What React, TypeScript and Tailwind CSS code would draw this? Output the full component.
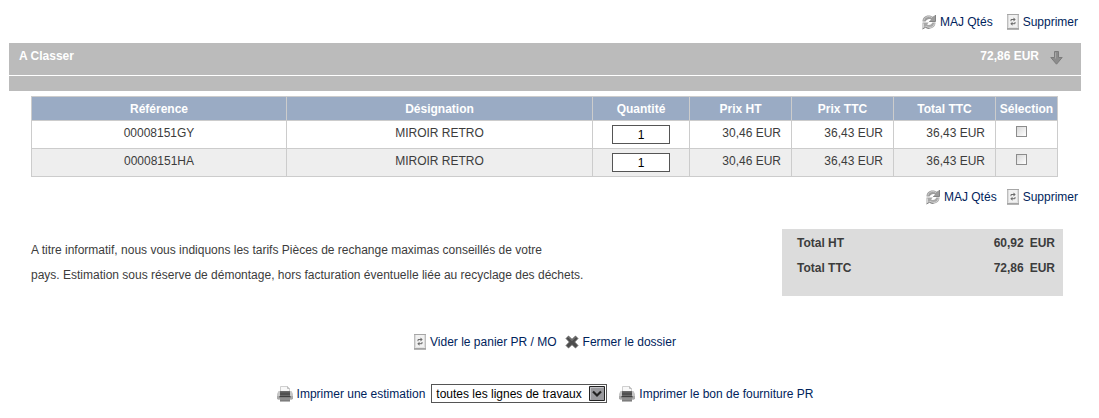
import type { ReactNode } from "react";

const lines = [
  { ref: "00008151GY", name: "MIROIR RETRO", qty: 1, ht: "30,46 EUR", ttc: "36,43 EUR", total: "36,43 EUR" },
  { ref: "00008151HA", name: "MIROIR RETRO", qty: 1, ht: "30,46 EUR", ttc: "36,43 EUR", total: "36,43 EUR" },
];

const totals = [
  { label: "Total HT", value: "60,92" },
  { label: "Total TTC", value: "72,86" },
];

function RefreshIcon() {
  return (
    <svg width="14" height="16" viewBox="0 0 14 16" className="shrink-0">
      <path d="M0.500 7.500C0.500 4 3 1.500 6.500 1.500c1.700 0 3 .4 4 1.200L13.500 1v6.500H7.200L9 5.400C7 4.400 4.600 5.200 3.600 7.500z" fill="#9c9c9c" />
      <path d="M1.800 6.500C2.400 4 4.300 2.600 6.500 2.600c1.500 0 2.600.3 3.500 1" fill="none" stroke="#cfcfcf" />
      <path d="M13.500 8.500c0 3.500-2.500 6-6 6-1.700 0-3-.4-4-1.200L0.500 15V8.500h6.300L5 10.600c2 1 4.400.2 5.400-2.100z" fill="#a8a8a8" />
      <path d="M12.500 9.500c-.6 2.500-2.500 3.900-4.700 3.900-1.500 0-2.600-.3-3.500-1L1.500 13.700V9.500" fill="none" stroke="#d6d6d6" />
      <path d="M7.200 7.500h6.300V1" fill="none" stroke="#7c7c7c" strokeWidth="0.9" />
      <path d="M0.500 15l3-1.700c1 .8 2.300 1.200 4 1.200" fill="none" stroke="#777" strokeWidth="0.9" />
    </svg>
  );
}

function TrashIcon() {
  return (
    <svg width="12" height="16" viewBox="0 0 12 16" className="shrink-0">
      <path d="M0 0h12v15.500H0z" fill="#bdbdbd" />
      <path d="M1 1h10v12H1z" fill="#dcdcdc" />
      <path d="M2 1h8v12H2z" fill="#f1f1f1" />
      <path d="M0 0h12v1H0z" fill="#a6a6a6" />
      <path d="M1 13h10v1H1z" fill="#e4e4e4" />
      <path d="M0 14.500h12v1H0z" fill="#8a8a8a" />
      <path d="M4 7.200V5.500h3" fill="none" stroke="#6b6b6b" />
      <path d="M6.500 3.500l2.200 2-2.200 2z" fill="#6b6b6b" />
      <path d="M8 8v1.700H5" fill="none" stroke="#6b6b6b" />
      <path d="M5.500 7.700l-2.200 2 2.200 2z" fill="#6b6b6b" />
    </svg>
  );
}

function CrossIcon() {
  return (
    <svg width="14" height="14" viewBox="0 0 14 14" className="shrink-0">
      <path d="M3.500 1L7 4.300 10.500 1 13 3.500 9.700 7l3.300 3.500-2.500 2.500L7 9.700 3.500 13 1 10.500 4.300 7 1 3.500z" fill="#4c4c4c" stroke="#666" strokeWidth="0.8" strokeLinejoin="round" />
      <path d="M3.500 2L7 5.500 10.500 2" fill="none" stroke="#858585" />
    </svg>
  );
}

function PrinterIcon() {
  return (
    <svg width="16" height="16" viewBox="0 0 16 16" className="shrink-0">
      <path d="M1.500 5h13L16 8v4.500l-1 1H1l-1-1V8z" fill="#c6c6c6" />
      <path d="M0 10h16v2.500l-1 1H1l-1-1z" fill="#a9a9a9" />
      <path d="M3.500 6V0.500h7L12.500 2.500V6z" fill="#f8f8f8" stroke="#cfcfcf" />
      <path d="M10.500 0.500v2h2" fill="none" stroke="#bbb" />
      <path d="M3 5h10v5H3z" fill="#6a6a6a" />
      <path d="M3 6.500h10V9H3z" fill="#505050" />
      <path d="M2.500 10h11v1.500h-11z" fill="#3f3f3f" />
      <path d="M3 11.500h10v3.500H3z" fill="#8e8e8e" />
      <path d="M3 14.500h10v1H3z" fill="#6d6d6d" />
    </svg>
  );
}

function DownIcon() {
  return (
    <svg width="13" height="14" viewBox="0 0 13 14" className="shrink-0">
      <path d="M4.500 0.500h4v6h3.700L6.500 13.200 0.800 6.500h3.700z" fill="#8c8c8c" stroke="#7c7c7c" strokeLinejoin="round" />
      <path d="M5.500 1.500v6" stroke="#a8a8a8" />
    </svg>
  );
}

function ActionLink({ icon, children }: { icon: ReactNode; children: ReactNode }) {
  return (
    <a href="#" className="flex items-center gap-1 whitespace-nowrap text-[#00235c]">
      {icon}
      <span>{children}</span>
    </a>
  );
}

export default function App() {
  return (
    <main className="bg-white pt-[14px] pr-[18px] pb-[14px] pl-[9px] font-['Liberation_Sans',Arial,sans-serif] text-[12px] leading-4 text-[#3c3c3c]">
      <nav className="flex justify-end gap-[14px] pr-[3px]">
        <ActionLink icon={<RefreshIcon />}>MAJ Qtés</ActionLink>
        <ActionLink icon={<TrashIcon />}>Supprimer</ActionLink>
      </nav>

      <header className="mt-[13px] flex h-8 items-start justify-between bg-[#bbb] pt-[5px] pr-[18px] pl-[10px] font-bold text-white">
        <h2>A Classer</h2>
        <div className="flex items-start gap-[11px]">
          <span>72,86 EUR</span>
          <button type="button" aria-label="Déplier" className="pt-[3px]">
            <DownIcon />
          </button>
        </div>
      </header>
      <div className="mt-px h-[15px] bg-[#bbb]" />

      <div className="mt-[5px] pr-[23px] pl-[22px]">
        <table className="w-full table-fixed border-collapse text-center">
          <colgroup>
            <col className="w-[255px]" />
            <col />
            <col className="w-[97px]" />
            <col className="w-[102px]" />
            <col className="w-[102px]" />
            <col className="w-[102px]" />
            <col className="w-[62px]" />
          </colgroup>
          <thead>
            <tr className="h-6 bg-[#9aabc4] text-white">
              {["Référence", "Désignation", "Quantité", "Prix HT", "Prix TTC", "Total TTC", "Sélection"].map((title) => (
                <th key={title} className="border border-[#ccc] p-0 font-bold">
                  {title}
                </th>
              ))}
            </tr>
          </thead>
          <tbody>
            {lines.map((line) => (
              <tr key={line.ref} className="h-7 align-top even:bg-[#eee]">
                <td className="border border-[#ccc] p-0 pt-1">{line.ref}</td>
                <td className="border border-[#ccc] p-0 pt-1">{line.name}</td>
                <td className="border border-[#ccc] p-0 pt-1">
                  <input
                    type="text"
                    defaultValue={line.qty}
                    aria-label={`Quantité ${line.ref}`}
                    className="mx-auto block h-[19px] w-[58px] border border-[#555] bg-white text-center text-black"
                  />
                </td>
                <td className="border border-[#ccc] p-0 pt-1 pr-[10px] text-right">{line.ht}</td>
                <td className="border border-[#ccc] p-0 pt-1 pr-[10px] text-right">{line.ttc}</td>
                <td className="border border-[#ccc] p-0 pt-1 pr-[10px] text-right">{line.total}</td>
                <td className="border border-[#ccc] p-0 pt-[5px] pr-[10px]">
                  <input
                    type="checkbox"
                    aria-label={`Sélection ${line.ref}`}
                    className="mx-auto block size-[11px] appearance-none border border-[#8c8c8c] bg-linear-to-br from-[#d8d8d8] to-white"
                  />
                </td>
              </tr>
            ))}
          </tbody>
        </table>
      </div>

      <nav className="mt-3 flex justify-end gap-[10px] pr-[3px]">
        <ActionLink icon={<RefreshIcon />}>MAJ Qtés</ActionLink>
        <ActionLink icon={<TrashIcon />}>Supprimer</ActionLink>
      </nav>

      <section className="mt-6 flex items-start justify-between pr-[18px] pl-[22px]">
        <p className="pt-[9px] leading-[25px]">
          A titre informatif, nous vous indiquons les tarifs Pièces de rechange maximas conseillés de votre
          <br />
          pays. Estimation sous réserve de démontage, hors facturation éventuelle liée au recyclage des déchets.
        </p>
        <dl className="w-[281px] bg-[#dcdcdc] pt-[2px] pr-2 pb-[15px] pl-[15px] leading-[25px] font-bold">
          {totals.map((row) => (
            <div key={row.label} className="flex justify-between">
              <dt>{row.label}</dt>
              <dd className="flex gap-[6px]">
                <span>{row.value}</span>
                <span>EUR</span>
              </dd>
            </div>
          ))}
        </dl>
      </section>

      <nav className="mt-[38px] flex justify-center gap-2">
        <ActionLink icon={<TrashIcon />}>Vider le panier PR / MO</ActionLink>
        <ActionLink icon={<CrossIcon />}>Fermer le dossier</ActionLink>
      </nav>

      <div className="mt-[34px] flex items-center justify-center">
        <ActionLink icon={<PrinterIcon />}>Imprimer une estimation</ActionLink>
        <div className="relative mr-3 ml-[6px]">
          <select
            aria-label="Lignes à imprimer"
            className="block h-[19px] w-[176px] appearance-none border border-[#555] bg-white pl-1 text-[12px] leading-4 text-black"
          >
            <option>toutes les lignes de travaux</option>
          </select>
          <svg width="16" height="15" viewBox="0 0 16 15" className="pointer-events-none absolute top-[2px] right-[2px]">
            <path d="M0.500 0.500h15v14h-15z" fill="#9a9a9e" stroke="#222" />
            <path d="M1.500 13.500v-12h13" fill="none" stroke="#c4c4c8" />
            <path d="M4 5.500l4 4 4-4" fill="none" stroke="#222" strokeWidth="2.200" />
          </svg>
        </div>
        <ActionLink icon={<PrinterIcon />}>Imprimer le bon de fourniture PR</ActionLink>
      </div>
    </main>
  );
}
